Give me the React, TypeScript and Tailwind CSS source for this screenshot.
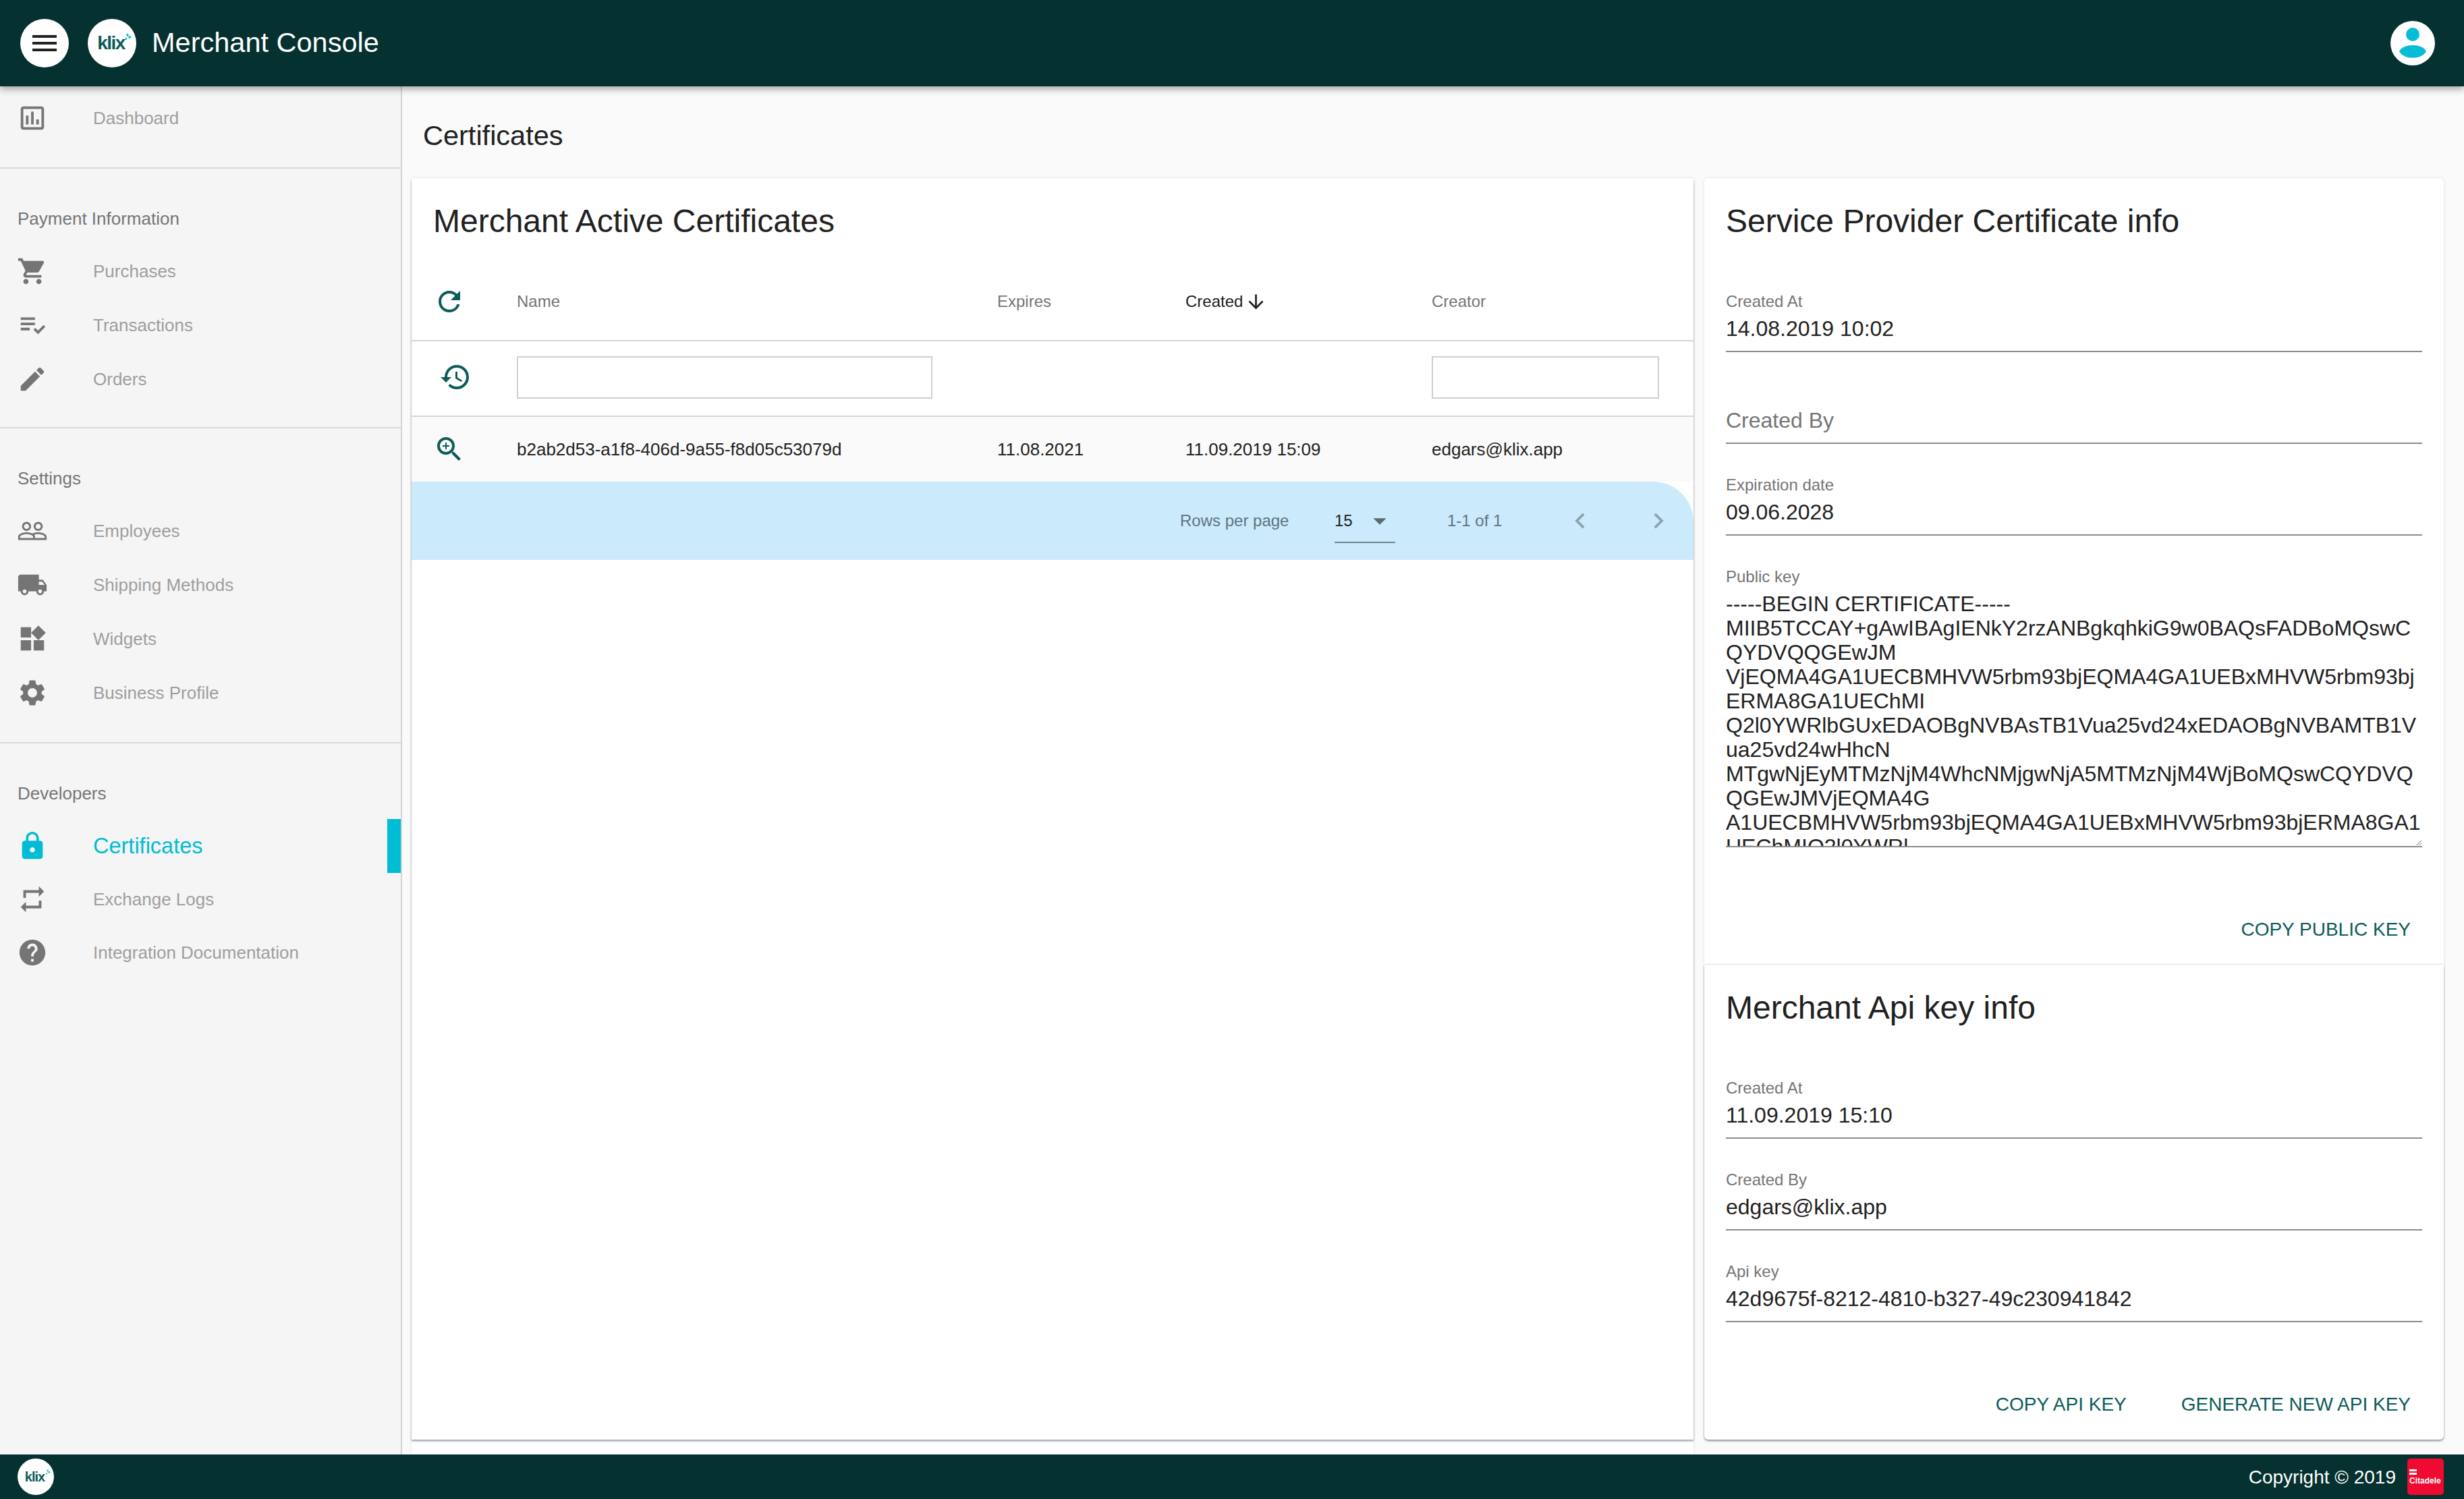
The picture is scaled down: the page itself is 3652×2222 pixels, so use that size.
import React from 'react';
import {
  MdArrowDownward,
  MdArrowDropDown,
  MdChevronLeft,
  MdChevronRight,
  MdEdit,
  MdHelp,
  MdHistory,
  MdLocalShipping,
  MdLock,
  MdMenu,
  MdOutlineAssessment,
  MdPeopleOutline,
  MdPlaylistAddCheck,
  MdRefresh,
  MdRepeat,
  MdSettings,
  MdShoppingCart,
  MdWidgets,
  MdZoomIn,
} from 'react-icons/md';

const PUBLIC_KEY = `-----BEGIN CERTIFICATE-----
MIIB5TCCAY+gAwIBAgIENkY2rzANBgkqhkiG9w0BAQsFADBoMQswC
QYDVQQGEwJM
VjEQMA4GA1UECBMHVW5rbm93bjEQMA4GA1UEBxMHVW5rbm93bj
ERMA8GA1UEChMI
Q2l0YWRlbGUxEDAOBgNVBAsTB1Vua25vd24xEDAOBgNVBAMTB1V
ua25vd24wHhcN
MTgwNjEyMTMzNjM4WhcNMjgwNjA5MTMzNjM4WjBoMQswCQYDVQ
QGEwJMVjEQMA4G
A1UECBMHVW5rbm93bjEQMA4GA1UEBxMHVW5rbm93bjERMA8GA1
UEChMIQ2l0YWRl`;

const Logo = ({ small }: { small?: boolean }) => (
  <div
    className={`flex shrink-0 items-center justify-center rounded-full bg-white ${small ? 'h-[54px] w-[54px]' : 'h-[72px] w-[72px]'}`}
  >
    <span
      className={`relative font-bold text-[#0b5c58] ${small ? 'pr-[3px] text-[20px] leading-[20px] tracking-[-1px]' : 'pr-[3px] text-[28px] leading-[28px] tracking-[-1.5px]'}`}
    >
      klix
      <svg
        viewBox="0 0 10 13"
        className={`absolute fill-[#00bcd4] ${small ? '-right-[6px] -top-[1px] h-[10px] w-[8px]' : '-right-[7px] -top-[1px] h-[14px] w-[11px]'}`}
      >
        <path d="M4.5 0 L6.2 2.6 L4.5 5.2 L2.8 2.6 Z" />
        <path d="M7.4 3.4 L9.8 5.6 L7.4 7.8 L5.2 5.6 Z" />
        <path d="M2.6 6 L4.2 8 L2.6 10 L1 8 Z" />
      </svg>
    </span>
  </div>
);

const NavItem = ({ icon, label, active }: { icon: React.ReactNode; label: string; active?: boolean }) => (
  <div className="relative flex h-[80px] items-center">
    <div className={`flex w-[96px] shrink-0 justify-center text-[46px] ${active ? 'text-[#00bcd4]' : 'text-[#757575]'}`}>{icon}</div>
    <span className={`ml-[42px] ${active ? 'text-[32.5px] text-[#00bcd4]' : 'text-[26px] text-[#9e9e9e]'}`}>{label}</span>
    {active && <div className="absolute right-0 top-0 h-full w-[20px] bg-[#00bcd4]" />}
  </div>
);

const NavLabel = ({ children }: { children: React.ReactNode }) => (
  <div className="mb-[18px] mt-[54px] flex h-[40px] items-center pl-[26px] text-[26px] text-[#757575]">{children}</div>
);

const Divider = () => <div className="h-[2px] bg-[#d9d9d9]" />;

const Field = ({ label, value }: { label: string; value?: string }) => (
  <div className="mb-[47px] border-b-[2px] border-[#8c8c8c]">
    {value ? (
      <>
        <div className="h-[28px] text-[24px] leading-[28px] text-[#757575]">{label}</div>
        <div className="mt-[6px] pb-[13px] text-[32px] leading-[40px] text-[#212121]">{value}</div>
      </>
    ) : (
      <div className="flex h-[87px] items-end pb-[13px] text-[32px] leading-[40px] text-[#757575]">{label}</div>
    )}
  </div>
);

const ActionButton = ({ children }: { children: React.ReactNode }) => (
  <button className="text-[28px] leading-[40px] text-[#0b5c58]">{children}</button>
);

const CardTitle = ({ children }: { children: React.ReactNode }) => (
  <h2 className="h-[56px] text-[48px] leading-[56px] text-[#212121]">{children}</h2>
);

const columns = 'grid grid-cols-[156px_712px_279px_365px_1fr] items-center';

const CertificateTable = () => (
  <div className="mt-[34px]">
    <div className={`${columns} h-[116px] border-b-[2px] border-[#d6d6d6] text-[24px] text-[#757575]`}>
      <div className="pl-[32px] text-[48px] text-[#0b5c58]">
        <MdRefresh />
      </div>
      <div>Name</div>
      <div>Expires</div>
      <div className="flex items-center text-[#212121]">
        Created
        <MdArrowDownward className="ml-[3px] text-[33px]" />
      </div>
      <div>Creator</div>
    </div>
    <div className={`${columns} h-[112px] border-b-[2px] border-[#d6d6d6] pb-[4px]`}>
      <div className="pl-[41px] text-[48px] text-[#0b5c58]">
        <MdHistory />
      </div>
      <input className="h-[63px] w-[616px] border-[2px] border-[#d0d0d0] bg-white" />
      <div />
      <div />
      <input className="h-[63px] w-[337px] border-[2px] border-[#d0d0d0] bg-white" />
    </div>
    <div className={`${columns} h-[96px] bg-[#fafafa] text-[26px] text-[#212121]`}>
      <div className="pl-[32px] text-[48px] text-[#0b5c58]">
        <MdZoomIn />
      </div>
      <div>b2ab2d53-a1f8-406d-9a55-f8d05c53079d</div>
      <div>11.08.2021</div>
      <div>11.09.2019 15:09</div>
      <div>edgars@klix.app</div>
    </div>
    <div className="flex h-[116px] items-center rounded-tr-[60px] bg-[#cbeafb] pl-[1139px] text-[24px]">
      <span className="w-[229px] text-[#5f7480]">Rows per page</span>
      <div className="flex h-[66px] w-[90px] items-center justify-between border-b-[2px] border-[#6f8791] pt-[2px] text-[#212121]">
        <span>15</span>
        <MdArrowDropDown className="text-[46px] text-[#5b6b73]" />
      </div>
      <span className="ml-[77px] w-[174px] text-[#5f7480]">1-1 of 1</span>
      <MdChevronLeft className="text-[46px] text-[#8aa4b0]" />
      <MdChevronRight className="ml-[70px] text-[46px] text-[#8aa4b0]" />
    </div>
  </div>
);

const App = () => {
  return (
    <div className="flex h-screen w-full flex-col overflow-hidden bg-[#fafafa] font-['Liberation_Sans',Arial,sans-serif]">
      <header className="relative z-10 flex h-[128px] shrink-0 items-center bg-[#053130] pl-[30px] pr-[43px] shadow-[0_4px_10px_rgba(0,0,0,0.35)]">
        <div className="flex h-[72px] w-[72px] items-center justify-center rounded-full bg-white text-[48px] text-[#212121]">
          <MdMenu />
        </div>
        <div className="ml-[28px]">
          <Logo />
        </div>
        <h1 className="mb-[2px] ml-[23px] text-[41.5px] text-white">Merchant Console</h1>
        <svg viewBox="0 0 66 66" className="ml-auto h-[66px] w-[66px]">
          <circle cx="33" cy="33" r="33" fill="#fff" />
          <circle cx="33" cy="20" r="10" fill="#06bcd6" />
          <path d="M13 45 C19 33 47 33 53 45 C47 58 19 58 13 45 Z" fill="#06bcd6" />
        </svg>
      </header>

      <div className="flex min-h-0 flex-1">
        <aside className="w-[596px] shrink-0 border-r-[2px] border-[#d4d4d4] bg-[#f5f5f5] pt-[7px]">
          <NavItem icon={<MdOutlineAssessment />} label="Dashboard" />
          <div className="mt-[33px]">
            <Divider />
          </div>
          <NavLabel>Payment Information</NavLabel>
          <NavItem icon={<MdShoppingCart />} label="Purchases" />
          <NavItem icon={<MdPlaylistAddCheck />} label="Transactions" />
          <NavItem icon={<MdEdit />} label="Orders" />
          <div className="mt-[31px]">
            <Divider />
          </div>
          <NavLabel>Settings</NavLabel>
          <NavItem icon={<MdPeopleOutline />} label="Employees" />
          <NavItem icon={<MdLocalShipping />} label="Shipping Methods" />
          <NavItem icon={<MdWidgets />} label="Widgets" />
          <NavItem icon={<MdSettings />} label="Business Profile" />
          <div className="mt-[33px]">
            <Divider />
          </div>
          <NavLabel>Developers</NavLabel>
          <NavItem active icon={<MdLock />} label="Certificates" />
          <div className="-mt-[1px]">
            <NavItem icon={<MdRepeat />} label="Exchange Logs" />
          </div>
          <div className="-mt-[1px]">
            <NavItem icon={<MdHelp />} label="Integration Documentation" />
          </div>
        </aside>

        <main className="flex min-w-0 flex-1 flex-col pl-[14px] pr-[30px]">
          <div className="flex h-[136px] shrink-0 items-center pl-[17px] pt-[10px] text-[41.5px] text-[#212121]">Certificates</div>
          <div className="flex min-h-0 flex-1 gap-[16px]">
            <div className="w-[1900px] shrink-0 bg-white shadow-[0_0_4px_rgba(0,0,0,0.1)]">
              <section className="h-[1870px] rounded-t-[6px] bg-white pt-[36px] shadow-[0_2px_3px_rgba(0,0,0,0.4)]">
                <div className="pl-[32px]">
                  <CardTitle>Merchant Active Certificates</CardTitle>
                </div>
                <CertificateTable />
              </section>
            </div>

            <div className="flex h-[1870px] flex-1 flex-col gap-[1px]">
              <section className="flex h-[1165px] flex-col rounded-t-[6px] bg-white px-[32px] pt-[36px] shadow-[0_0_4px_rgba(0,0,0,0.1)]">
                <CardTitle>Service Provider Certificate info</CardTitle>
                <div className="mt-[77px]">
                  <Field label="Created At" value="14.08.2019 10:02" />
                  <Field label="Created By" />
                  <Field label="Expiration date" value="09.06.2028" />
                  <div className="h-[28px] text-[24px] leading-[28px] text-[#757575]">Public key</div>
                  <textarea
                    readOnly
                    value={PUBLIC_KEY}
                    className="mt-[8px] block h-[379px] w-full resize-y overflow-hidden whitespace-pre border-b-[2px] border-[#8c8c8c] text-[32px] leading-[36px] text-[#212121] outline-none"
                  />
                </div>
                <div className="mb-[31px] mt-auto flex justify-end pr-[17px]">
                  <ActionButton>COPY PUBLIC KEY</ActionButton>
                </div>
              </section>

              <section className="flex flex-1 flex-col rounded-b-[6px] bg-white px-[32px] pt-[36px] shadow-[0_2px_3px_rgba(0,0,0,0.4),0_0_4px_rgba(0,0,0,0.08)]">
                <CardTitle>Merchant Api key info</CardTitle>
                <div className="mt-[77px]">
                  <Field label="Created At" value="11.09.2019 15:10" />
                  <Field label="Created By" value="edgars@klix.app" />
                  <Field label="Api key" value="42d9675f-8212-4810-b327-49c230941842" />
                </div>
                <div className="mb-[32px] mt-auto flex justify-end gap-[81px] pr-[17px]">
                  <ActionButton>COPY API KEY</ActionButton>
                  <ActionButton>GENERATE NEW API KEY</ActionButton>
                </div>
              </section>
            </div>
          </div>
        </main>
      </div>

      <footer className="relative z-10 flex h-[66px] shrink-0 items-center bg-[#053130] pl-[26px] pr-[30px]">
        <Logo small />
        <span className="ml-auto pt-[2px] text-[28px] text-white">Copyright © 2019</span>
        <div className="ml-[17px] flex h-[54px] w-[54px] flex-col rounded-[5px] bg-[#ee0a30] pl-[3px] pt-[16px] text-white">
          <div className="h-[3px] w-[11px] bg-white" />
          <div className="mt-[2px] h-[3px] w-[11px] bg-white" />
          <span className="mt-[2px] text-[12px] font-bold leading-[14px]">Citadele</span>
        </div>
      </footer>
    </div>
  );
};

export default App;
